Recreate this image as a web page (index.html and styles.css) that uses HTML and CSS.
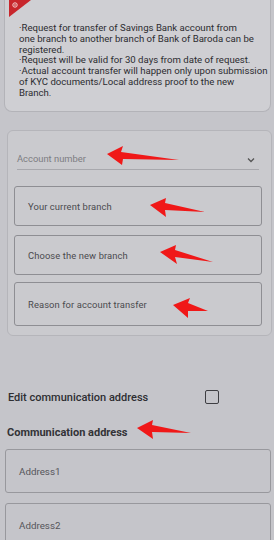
FILE: index.html
```html
<!DOCTYPE html>
<html>
<head>
<meta charset="utf-8">
<link rel="stylesheet" href="styles.css">
</head>
<body>
<div class="page">
  <div class="info">
    <svg class="badge" width="26" height="18" viewBox="0 0 26 18">
      <polygon points="4,0 26,0 4,17" fill="#c8262c"/>
      <circle cx="10" cy="5" r="2.2" fill="none" stroke="#f3d0d0" stroke-width="1"/>
      <circle cx="10" cy="5" r="0.8" fill="#f3d0d0"/>
    </svg>
    <p>·Request for transfer of Savings Bank account from<br>one branch to another branch of Bank of Baroda can be<br>registered.<br>·Request will be valid for 30 days from date of request.<br>·Actual account transfer will happen only upon submission<br>of KYC documents/Local address proof to the new<br>Branch.</p>
  </div>

  <div class="card">
    <div class="select">
      <span class="placeholder">Account number</span>
      <svg class="chev" width="8" height="6" viewBox="0 0 8 6"><polyline points="1,1.5 4,4.5 7,1.5" fill="none" stroke="#555" stroke-width="1.3"/></svg>
    </div>
    <div class="box">Your current branch</div>
    <div class="box">Choose the new branch</div>
    <div class="box">Reason for account transfer</div>
  </div>

  <div class="edit-row">
    <span class="label">Edit communication address</span>
    <span class="check"></span>
  </div>
  <div class="section-title">Communication address</div>
  <div class="abox">Address1</div>
  <div class="abox">Address2</div>

  <svg class="arrows" width="274" height="540" viewBox="0 0 274 540">
    <polygon points="107,154 123,146 121,152 179,160 123,159 122,165" fill="#f01818"/>
    <polygon points="150,205 166,198 165,203 205,212 165,210 166,217" fill="#f01818"/>
    <polygon points="160,252 176,245 175,250 213,262 175,257 177,264" fill="#f01818"/>
    <polygon points="173,305 190,298 188,303 208,311 188,311 188,318" fill="#f01818"/>
    <polygon points="137,428 153,420 152,425 191,433 152,432 153,439" fill="#f01818"/>
  </svg>
</div>
</body>
</html>
```

FILE: styles.css
```css
* { box-sizing: border-box; }
html, body { margin: 0; padding: 0; }
body {
  background: #c5c5ca;
  font-family: Roboto, "Noto Sans", sans-serif;
  width: 274px;
  height: 540px;
  overflow: hidden;
}
.page {
  position: relative;
  width: 274px;
  height: 540px;
  overflow: hidden;
  padding-top: 1px;
}
.info {
  position: relative;
  margin: -1px 3px 0 4px;
  background: #cfcfd3;
  border: 1px solid #b3b3b8;
  border-top: none;
  border-radius: 0 0 8px 8px;
  padding: 23px 0 9px 14px;
  height: 112px;
}
.badge {
  position: absolute;
  left: 0;
  top: 0;
}
.info p {
  margin: 0;
  font-size: 9.6px;
  line-height: 10.8px;
  color: #2c2c30;
  white-space: nowrap;
}
.card {
  margin: 18px 2px 0 7px;
  background: #cacace;
  border: 1px solid #b5b5ba;
  border-radius: 6px;
  padding: 14px 9px 7px 6px;
  height: 206px;
}
.select {
  display: flex;
  align-items: center;
  justify-content: space-between;
  margin: 0 3px 0 3px;
  height: 25px;
  border-bottom: 1px solid #a8a8ad;
  padding: 0 4px 0 0;
}
.select .chev { margin-top: 6px; }
.placeholder {
  font-size: 9.4px;
  color: #7d7d82;
  margin-top: 2px;
}
.box {
  height: 40px;
  border: 1px solid #8e8e93;
  border-radius: 3px;
  display: flex;
  align-items: center;
  padding-left: 13px;
  font-size: 9.4px;
  color: #4a4a4f;
  letter-spacing: 0.1px;
}
.card .box:nth-child(2) { margin-top: 16px; }
.card .box:nth-child(3) { margin-top: 9px; }
.card .box:nth-child(4) { margin-top: 7px; height: 44px; }
.edit-row {
  display: flex;
  align-items: center;
  margin: 53px 0 0 8px;
  height: 16px;
}
.label {
  font-size: 11px;
  font-weight: 500;
  color: #2e2e32;
  width: 197px;
}
.check {
  width: 14px;
  height: 14px;
  border: 1.6px solid #3e3e42;
  border-radius: 2px;
}
.section-title {
  margin: 21px 0 0 7px;
  font-size: 11px;
  font-weight: 700;
  color: #333337;
}
.abox {
  margin: 10px 3px 0 5px;
  height: 44px;
  border: 1px solid #98989d;
  border-radius: 3px;
  display: flex;
  align-items: center;
  padding-left: 13px;
  font-size: 9.8px;
  color: #55555a;
}
.abox + .abox { margin-top: 10px; }
.arrows {
  position: absolute;
  left: 0;
  top: 0;
  pointer-events: none;
}
```
